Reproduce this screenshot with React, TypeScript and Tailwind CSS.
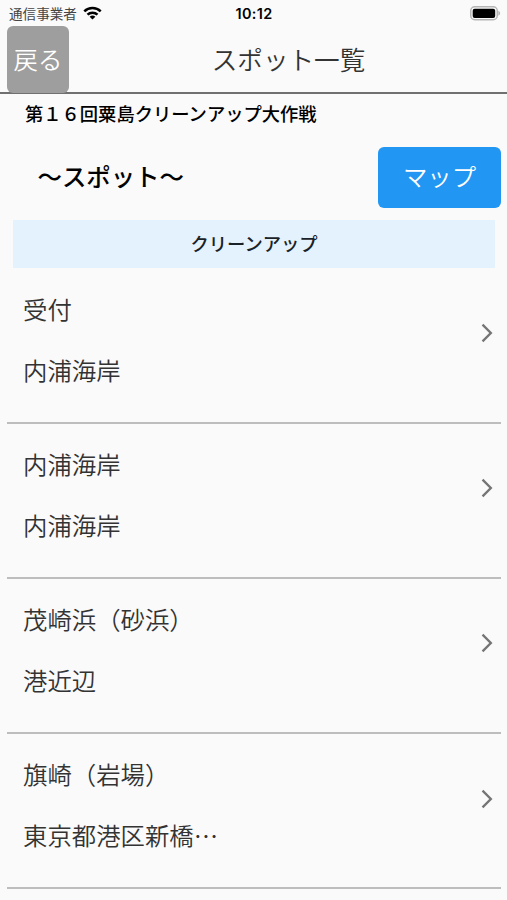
import { MdArrowForwardIos } from "react-icons/md";

const spots = [
    { name: "受付", place: "内浦海岸" },
    { name: "内浦海岸", place: "内浦海岸" },
    { name: "茂崎浜（砂浜）", place: "港近辺" },
    { name: "旗崎（岩場）", place: "東京都港区新橋…" },
];

function StatusBar() {
    return (
        <div className="h-[26px] pl-[9px] pr-[6px] grid grid-cols-3 items-center">
            <div className="flex items-center gap-[6px] text-[13.6px] leading-none text-[#444]">
                <span className="whitespace-nowrap pt-px">通信事業者</span>
                <svg width="19" height="14" viewBox="0 0 19 14" fill="none" stroke="#000" strokeWidth="2.5">
                    <path d="M1.3 5.4a11.6 11.6 0 0 1 16.4 0" />
                    <path d="M4.5 8.7a7.1 7.1 0 0 1 10 0" />
                    <path d="M9.5 13.5 6.6 10.8a4.3 4.3 0 0 1 5.8 0Z" fill="#000" stroke="none" />
                </svg>
            </div>
            <span className="pt-[2px] pr-[2px] text-center font-['Inter'] font-semibold text-[14.4px] leading-none tracking-[0.4px] text-black">10:12</span>
            <svg className="justify-self-end" width="31" height="15" viewBox="0 0 31 15">
                <rect x="0.75" y="0.75" width="26.5" height="13" rx="4" fill="#fafafa" stroke="#b5b5b5" strokeWidth="1.5" />
                <rect x="2.7" y="2.7" width="22.5" height="9.2" rx="2" fill="#000" />
                <path d="M28.3 4.8c2.4.8 2.4 4.2 0 5Z" fill="#b5b5b5" />
            </svg>
        </div>
    );
}

export default function App() {
    return (
        <div className="h-[900px] w-full overflow-hidden bg-[#fafafa] font-['Noto_Sans_CJK_JP',sans-serif] text-[#333]">
            <StatusBar />

            <header className="h-[68px] border-b-2 border-[#707070] pl-[7px] pr-[7px] flex items-start">
                <button className="w-[62px] h-[67px] shrink-0 rounded-md bg-[#9e9e9e] text-white text-[24.4px] font-[350] whitespace-nowrap">
                    戻る
                </button>
                <h1 className="flex-1 h-[66px] flex items-center justify-center pl-[8px] text-[25.6px] font-[350]">
                    スポット一覧
                </h1>
            </header>

            <h2 className="h-[40px] pl-[25px] text-[18.3px] leading-[39px] font-medium text-black">
                第１６回粟島クリーンアップ大作戦
            </h2>

            <div className="h-[86px] pt-[12.5px] pl-[37.5px] pr-[6px] flex items-start justify-between">
                <h3 className="h-[60px] flex items-center text-[24.4px] font-medium text-black">～スポット～</h3>
                <button className="w-[123px] h-[61px] pb-px rounded-md bg-[#2196f3] text-white text-[24.4px] font-[350]">
                    マップ
                </button>
            </div>

            <div className="ml-[13px] mr-[12px] h-[48px] flex items-center justify-center bg-[#e3f2fd] text-[18.3px] font-medium text-[#1b2227]">
                クリーンアップ
            </div>

            <ul className="pt-[0.6px] pl-[7px] pr-[6px]">
                {spots.map((spot, i) => (
                    <li key={i} className="h-[155.2px] pl-4 pr-[3px] pt-[9px] flex items-start justify-between border-b-2 border-[#bdbdbd]">
                        <div className="text-[24.4px] leading-[61px] font-[350]">
                            <p>{spot.name}</p>
                            <p>{spot.place}</p>
                        </div>
                        <MdArrowForwardIos className="mt-[44.5px] text-[#757575]" size={22} />
                    </li>
                ))}
            </ul>
        </div>
    );
}
